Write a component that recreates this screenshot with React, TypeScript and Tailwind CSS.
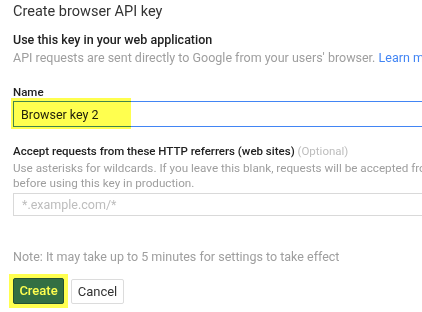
import React from "react";

function Highlight({ className }: { className: string }) {
  return (
    <div
      className={`pointer-events-none absolute bg-[#ffff4f] mix-blend-multiply ${className}`}
    />
  );
}

export default function App() {
  return (
    <div className="relative h-[312px] w-[422px] overflow-hidden bg-white pl-[13px] font-['Roboto',sans-serif]">
      <h1 className="pt-[2px] text-[14.5px] leading-[20px] text-[#333]">Create browser API key</h1>

      <div className="mt-[9px] whitespace-nowrap">
        <h2 className="text-[12.5px] font-medium leading-[18px] text-[#212121]">
          Use this key in your web application
        </h2>
        <p className="text-[12.5px] leading-[18px] text-[#9e9e9e]">
          API requests are sent directly to Google from your users' browser.{" "}
          <span className="text-[#4285f4]">Learn more</span>
        </p>
      </div>

      <label className="mt-[17px] block text-[11.5px] font-medium leading-[16px] text-[#212121]">Name</label>
      <div className="relative mt-[1px]">
        <input
          defaultValue="Browser key 2"
          className="block h-[26px] w-[440px] border border-[#4285f4] bg-white px-[7px] text-[12.5px] text-[#222] outline-none"
        />
        <Highlight className="-left-[2px] -top-[3px] h-[31px] w-[120px]" />
      </div>

      <div className="mt-[17px] whitespace-nowrap">
        <div className="text-[11.5px] font-medium leading-[15px] text-[#212121]">
          Accept requests from these HTTP referrers (web sites){" "}
          <span className="font-normal text-[#bdbdbd]">(Optional)</span>
        </div>
        <p className="mt-[2px] text-[11.7px] leading-[15px] text-[#9e9e9e]">
          Use asterisks for wildcards. If you leave this blank, requests will be accepted from any referrer.
        </p>
        <p className="text-[11.7px] leading-[15px] text-[#9e9e9e]">before using this key in production.</p>
      </div>
      <input
        placeholder="*.example.com/*"
        className="mt-[2px] block h-[23px] w-[440px] border border-[#d9d9d9] px-[8px] text-[12.5px] outline-none placeholder:text-[#bdbdbd]"
      />

      <p className="mt-[33px] text-[12.5px] leading-[15px] text-[#9e9e9e]">
        Note: It may take up to 5 minutes for settings to take effect
      </p>

      <div className="relative mt-[14px] flex items-start gap-[7px]">
        <button className="h-[26px] w-[51px] rounded-[2px] border border-[#24519e] bg-[#336fd9] text-[13px] font-medium text-white">
          Create
        </button>
        <button className="mt-[1px] h-[25px] w-[53px] rounded-[2px] border border-[#dcdcdc] bg-white text-[13px] text-[#333]">
          Cancel
        </button>
        <Highlight className="-left-[4px] -top-[4px] h-[34px] w-[59px]" />
      </div>
    </div>
  );
}
